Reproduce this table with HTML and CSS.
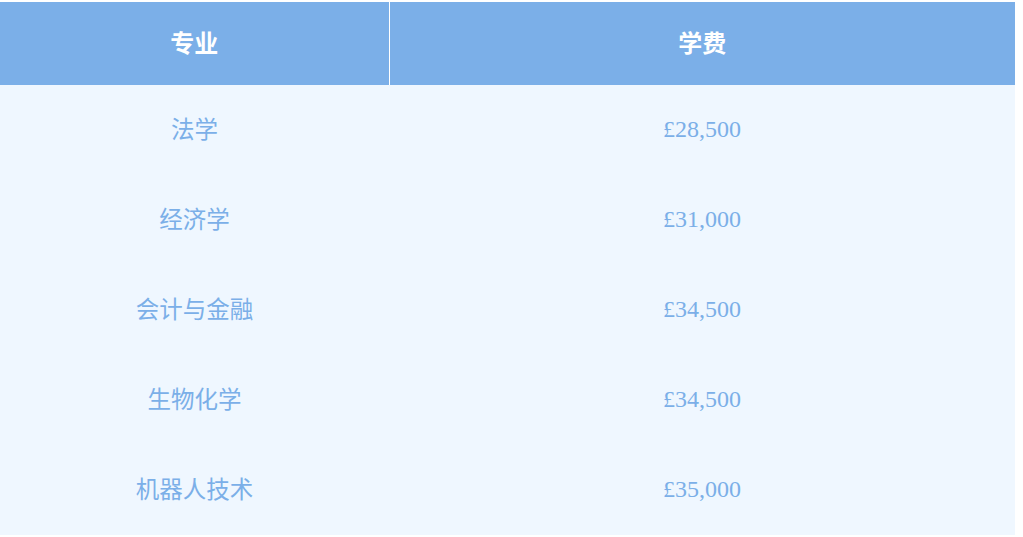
FILE: index.html
```html
<!DOCTYPE html>
<html lang="zh">
<head>
<meta charset="utf-8">
<link rel="stylesheet" href="styles.css">
</head>
<body>
<table class="fees">
  <thead>
    <tr><th class="c1">专业</th><th class="c2">学费</th></tr>
  </thead>
  <tbody>
    <tr><td class="zh">法学</td><td>£28,500</td></tr>
    <tr><td class="zh">经济学</td><td>£31,000</td></tr>
    <tr><td class="zh">会计与金融</td><td>£34,500</td></tr>
    <tr><td class="zh">生物化学</td><td>£34,500</td></tr>
    <tr><td class="zh">机器人技术</td><td>£35,000</td></tr>
  </tbody>
</table>
</body>
</html>
```

FILE: styles.css
```css
html, body {
  margin: 0;
  padding: 0;
  background: #ffffff;
}
body {
  padding-top: 2px;
  font-family: "Liberation Serif", "Noto Sans CJK SC", serif;
}
.fees {
  width: 1015px;
  border-collapse: collapse;
  table-layout: fixed;
}
.fees th {
  box-sizing: border-box;
  height: 83px;
  padding: 0 0 4px 0;
  background: #7bafe8;
  color: #ffffff;
  font-family: "Noto Sans CJK SC", sans-serif;
  font-weight: 700;
  font-size: 24px;
  line-height: 30px;
  text-align: center;
  vertical-align: middle;
}
.fees th.c1 {
  width: 389px;
  border-right: 1px solid #ffffff;
}
.fees td {
  box-sizing: border-box;
  height: 90px;
  padding: 0 0 2px 0;
  background: #eff7ff;
  color: #7bafe8;
  font-size: 24px;
  line-height: 30px;
  text-align: center;
  vertical-align: middle;
}
.fees td.zh {
  font-size: 23.5px;
  padding-bottom: 0;
}
```
